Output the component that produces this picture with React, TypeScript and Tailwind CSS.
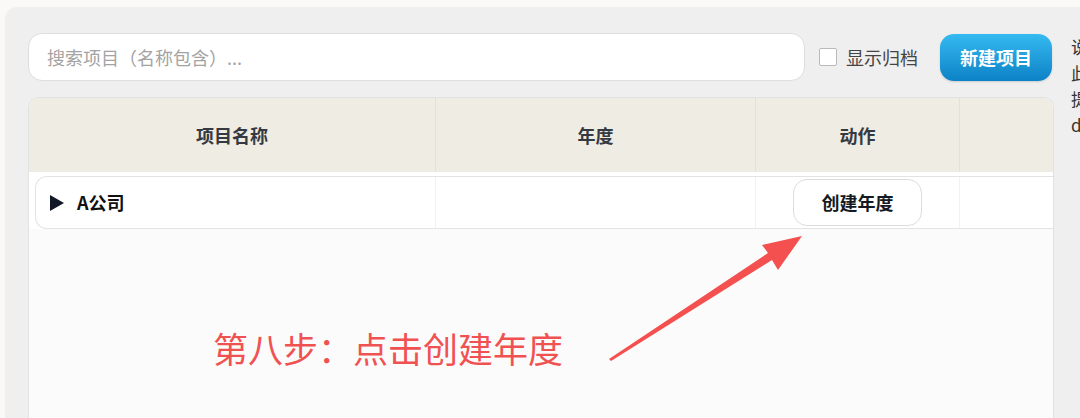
import React from "react";

const font = { fontFamily: '"Noto Sans CJK SC", "Noto Sans", sans-serif' };

export default function App() {
  return (
    <div
      className="relative w-[1080px] h-[418px] overflow-hidden bg-[#faf9f7] pt-[7px] pl-[5px]"
      style={font}
    >
      <div className="h-[411px] bg-[#efefef] rounded-tl-[12px] pl-[23px] pt-[26px] flex">
        {/* main column */}
        <div className="w-[1026px] flex-none flex flex-col">
          {/* toolbar */}
          <div className="flex items-center h-[48px]">
            <div className="w-[777px] h-[48px] flex items-center bg-white border border-[#dedede] rounded-[14px] pl-[18px] text-[18px] text-[#a3a3a3]">
              搜索项目（名称包含）...
            </div>
            <div className="ml-[14px] w-[18px] h-[18px] bg-white border border-[#b9b9b9] rounded-[2px]" />
            <span className="ml-[9px] text-[18px] text-[#444]">显示归档</span>
            <button className="ml-[22px] w-[112px] h-[47px] rounded-[14px] bg-linear-to-b from-[#35baf1] to-[#0a82c6] text-white font-bold text-[18px] shadow-[0_1px_2px_rgba(0,0,0,0.15)]">
              新建项目
            </button>
          </div>

          {/* table */}
          <div className="mt-[16px] flex-1 border border-[#e2e2e2] border-b-0 rounded-t-[10px] overflow-hidden bg-[#fbfbfb]">
            <div className="grid grid-cols-[407px_320px_204px_1fr] h-[74px] bg-[#efece4] text-[18px] font-bold text-[#353a42]">
              <div className="flex items-center justify-center border-r border-[#e4e1d8]">项目名称</div>
              <div className="flex items-center justify-center border-r border-[#e4e1d8]">年度</div>
              <div className="flex items-center justify-center border-r border-[#e4e1d8]">动作</div>
              <div />
            </div>
            <div className="bg-white pt-[4px] pl-[6px]">
              <div className="grid grid-cols-[400px_320px_204px_1fr] h-[53px] bg-white border border-r-0 border-[#e3e3e3] rounded-l-[12px]">
                <div className="flex items-center pl-[14px] border-r border-[#f2f2f2]">
                  <svg width="14" height="16" viewBox="0 0 14 16">
                    <polygon points="0,0 14,8 0,16" fill="#111827" />
                  </svg>
                  <span className="ml-[13px] text-[18px] font-bold text-[#111]">A公司</span>
                </div>
                <div className="border-r border-[#f2f2f2]" />
                <div className="flex items-center justify-center border-r border-[#f2f2f2]">
                  <button className="w-[129px] h-[47px] rounded-[14px] bg-white border border-[#dcdcdc] text-[18px] font-bold text-[#151a22]">
                    创建年度
                  </button>
                </div>
                <div />
              </div>
            </div>
          </div>
        </div>

        {/* right clipped notes */}
        <div className="ml-[17px] w-[200px] flex-none pt-[1px] text-[17px] leading-[26px] text-[#333]">
          <div>说明：可在此处</div>
          <div>此处为项目列表</div>
          <div>提示：请先创建</div>
          <div>default</div>
        </div>
      </div>

      {/* annotation */}
      <div className="absolute left-[213px] top-[330px] text-[35px] leading-[35px] text-[#f05252] whitespace-nowrap">
        第八步：点击创建年度
      </div>
      <svg
        className="absolute left-0 top-0 pointer-events-none"
        width="1080"
        height="418"
        viewBox="0 0 1080 418"
      >
        <polygon
          points="609,359 768,253 762,245 802,236 778,270 772,260 611,361"
          fill="#f4504f"
        />
      </svg>
    </div>
  );
}
